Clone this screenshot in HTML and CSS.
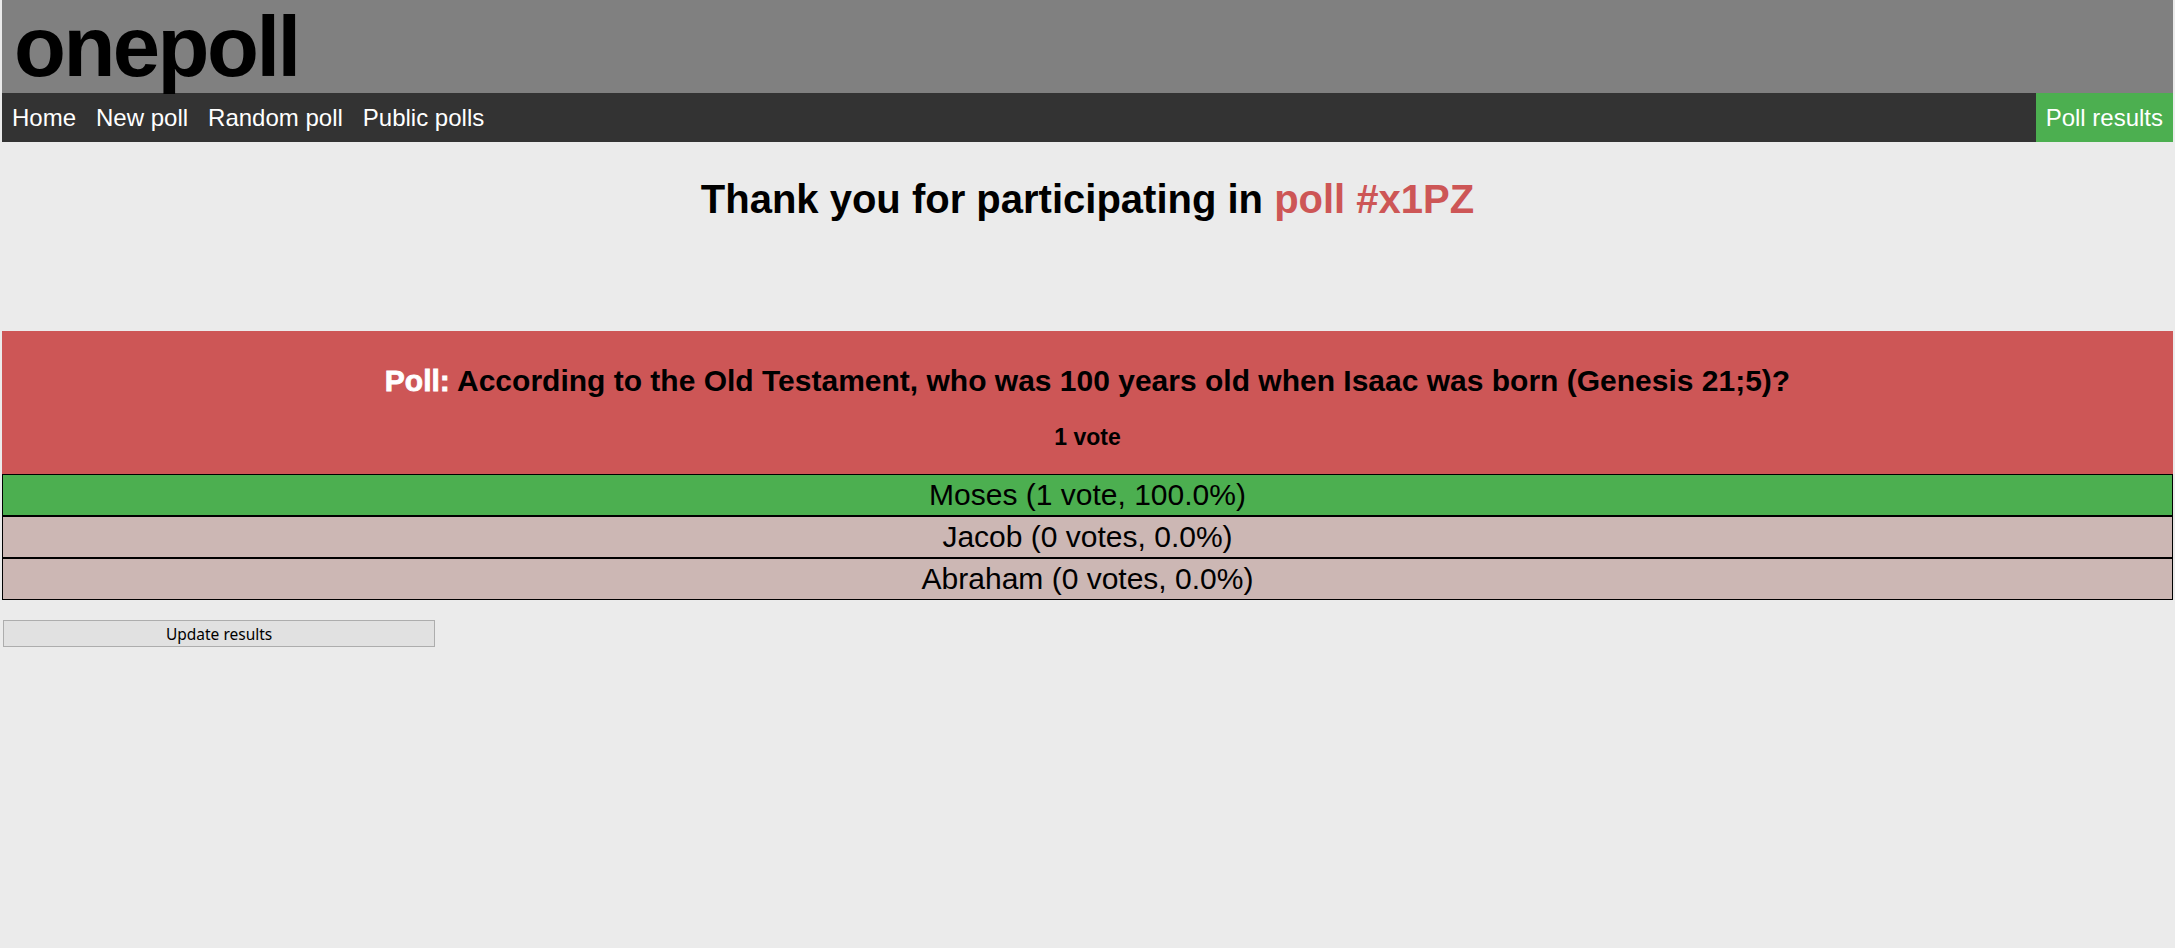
FILE: index.html
```html
<!DOCTYPE html>
<html lang="en">
<head>
<meta charset="utf-8">
<title>onepoll</title>
<link rel="stylesheet" href="styles.css">
</head>
<body>
<header class="topbar">
  <h1 class="logo">onepoll</h1>
</header>
<nav class="navbar">
  <a class="nav-link" href="#">Home</a>
  <a class="nav-link" href="#">New poll</a>
  <a class="nav-link" href="#">Random poll</a>
  <a class="nav-link" href="#">Public polls</a>
  <a class="nav-link nav-active" href="#">Poll results</a>
</nav>
<main>
  <h2 class="thanks">Thank you for participating in <span class="poll-id">poll #x1PZ</span></h2>
  <section class="poll">
    <h3 class="question"><span class="poll-label">Poll:</span> According to the Old Testament, who was 100 years old when Isaac was born (Genesis 21;5)?</h3>
    <p class="total">1 vote</p>
  </section>
  <div class="results">
    <div class="result winner">Moses (1 vote, 100.0%)</div>
    <div class="result">Jacob (0 votes, 0.0%)</div>
    <div class="result">Abraham (0 votes, 0.0%)</div>
  </div>
  <button class="update" type="button">Update results</button>
</main>
</body>
</html>
```
FILE: styles.css
```css
html, body {
  background: #ebebeb;
}
body {
  margin: 0 2px;
  font-family: "Liberation Sans", Arial, sans-serif;
  color: #000;
}
.topbar {
  background: #808080;
  height: 93px;
  box-sizing: border-box;
  padding: 4px 12px 0;
}
.logo {
  margin: 0;
  font-size: 85px;
  line-height: 86px;
  font-weight: bold;
  letter-spacing: -2.5px;
  color: #000;
}
.navbar {
  display: flex;
  background: #333333;
}
.nav-link {
  display: block;
  padding: 10px 10px;
  font-size: 24px;
  line-height: 29px;
  color: #fff;
  text-decoration: none;
}
.nav-active {
  margin-left: auto;
  background: #4caf50;
}
.thanks {
  margin: 34px 0 0;
  text-align: center;
  font-size: 40px;
  line-height: 46px;
  font-weight: bold;
}
.poll-id {
  color: #cd5656;
}
.poll {
  margin-top: 109px;
  background: #cd5656;
  text-align: center;
  padding: 32px 0 23px;
}
.question {
  margin: 0;
  font-size: 30px;
  line-height: 35px;
  font-weight: bold;
}
.poll-label {
  color: #fff;
  font-weight: 900;
  -webkit-text-stroke: 0.8px #fff;
}
.total {
  margin: 25px 0 0;
  font-size: 23px;
  line-height: 28px;
  font-weight: bold;
}
.result {
  border: 1px solid #000;
  background: #ccb7b4;
  text-align: center;
  font-size: 30px;
  line-height: 40px;
  height: 40px;
}
.result.winner {
  background: #4caf50;
}
.update {
  display: block;
  margin: 20px 0 0 1px;
  width: calc(20% - 2px);
  height: 27px;
  padding: 0;
  background: #e1e1e1;
  border: 1px solid #adadad;
  border-radius: 0;
  font-family: "Noto Sans", "Open Sans", sans-serif;
  font-size: 15.5px;
  color: #000;
}
```
